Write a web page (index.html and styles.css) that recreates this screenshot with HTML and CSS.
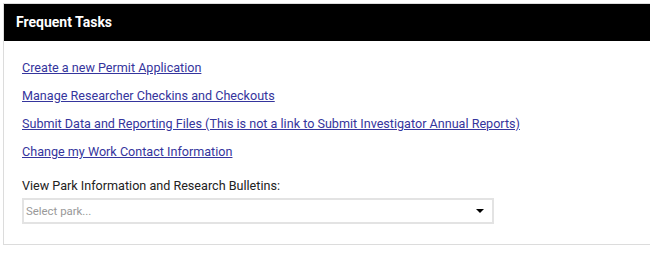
FILE: index.html
```html
<!DOCTYPE html>
<html>
<head>
<meta charset="utf-8">
<link rel="stylesheet" href="styles.css">
</head>
<body>
<div class="card">
  <div class="card-header">Frequent Tasks</div>
  <div class="card-body">
    <ul class="tasks">
      <li><a href="#">Create a new Permit Application</a></li>
      <li><a href="#">Manage Researcher Checkins and Checkouts</a></li>
      <li><a href="#">Submit Data and Reporting Files (This is not a link to Submit Investigator Annual Reports)</a></li>
      <li><a href="#">Change my Work Contact Information</a></li>
    </ul>
    <label class="park-label">View Park Information and Research Bulletins:</label>
    <div class="select">
      <span class="placeholder">Select park...</span>
      <span class="caret"></span>
    </div>
  </div>
</div>
</body>
</html>
```
FILE: styles.css
```css
html, body {
  margin: 0;
  padding: 0;
  background: #fff;
  overflow: hidden;
}
body {
  padding: 3px 0 0 3px;
  font-family: Roboto, "Liberation Sans", sans-serif;
}
.card {
  width: 647px;
  border: 1px solid #dcdcdc;
  border-right: none;
  box-sizing: border-box;
  height: 242px;
}
.card-header {
  background: #000;
  color: #fff;
  font-weight: bold;
  font-size: 14px;
  height: 37px;
  line-height: 37px;
  padding-left: 12px;
}
.card-body {
  padding: 18px 0 0 18px;
}
.tasks {
  list-style: none;
  margin: 0;
  padding: 0;
}
.tasks li {
  height: 28px;
  line-height: 18px;
  font-size: 12.6px;
}
.tasks a {
  color: #35359d;
  text-decoration: underline;
}
.park-label {
  display: block;
  font-size: 12.6px;
  color: #222;
  line-height: 18px;
  margin-top: 6px;
}
.select {
  margin-top: 3px;
  width: 472px;
  height: 26px;
  box-sizing: border-box;
  border: 2px solid #e3e3e3;
  display: flex;
  align-items: center;
  justify-content: space-between;
  padding: 0 8px 0 2px;
}
.placeholder {
  font-size: 11.4px;
  color: #999;
}
.caret {
  width: 0;
  height: 0;
  border-left: 4px solid transparent;
  border-right: 4px solid transparent;
  border-top: 4px solid #000;
}
```
